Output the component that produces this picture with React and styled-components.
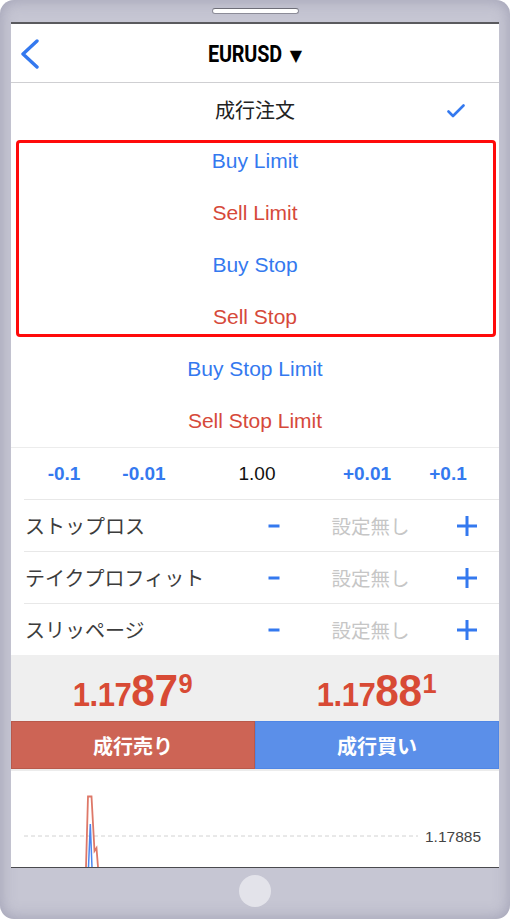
import styled, { createGlobalStyle } from "styled-components";

const BLUE = "#3479ef";
const RED = "#d6493a";

const GlobalStyle = createGlobalStyle`
  html, body {
    margin: 0;
    padding: 0;
    background: #fff;
  }
  body {
    font-family: "Liberation Sans", "Noto Sans CJK JP", sans-serif;
  }
`;

const orders = [
  { label: "Buy Limit", tone: "buy" },
  { label: "Sell Limit", tone: "sell" },
  { label: "Buy Stop", tone: "buy" },
  { label: "Sell Stop", tone: "sell" },
];

const steps = [
  { label: "-0.1", accent: true },
  { label: "-0.01", accent: true },
  { label: "1.00", accent: false },
  { label: "+0.01", accent: true },
  { label: "+0.1", accent: true },
];

const settings = ["ストップロス", "テイクプロフィット", "スリッページ"];

const Price = ({ head, big, sup }) => (
  <PriceText>
    <PriceSmall>{head}</PriceSmall>
    <PriceBig>{big}</PriceBig>
    <PriceSup>{sup}</PriceSup>
  </PriceText>
);

const App = () => {
  return (
    <>
      <GlobalStyle />
      <Device>
        <Speaker />
        <Screen>
          <Header>
            <BackButton>
              <svg width="20" height="30" viewBox="0 0 20 30">
                <polyline
                  points="17,2 3,15 17,28"
                  fill="none"
                  stroke={BLUE}
                  strokeWidth="3.4"
                  strokeLinecap="round"
                  strokeLinejoin="round"
                />
              </svg>
            </BackButton>
            <Title>
              <Symbol>EURUSD</Symbol>
              <Caret>▼</Caret>
            </Title>
          </Header>

          <OrderList>
            <OrderRow>
              成行注文
              <Check>
                <svg width="18" height="14" viewBox="0 0 18 14">
                  <polyline
                    points="1.5,7.5 6,12 16.5,1.5"
                    fill="none"
                    stroke={BLUE}
                    strokeWidth="2.6"
                    strokeLinecap="round"
                    strokeLinejoin="round"
                  />
                </svg>
              </Check>
            </OrderRow>
            <Highlight>
              {orders.map((o) => (
                <OrderRow key={o.label} $tone={o.tone}>
                  {o.label}
                </OrderRow>
              ))}
            </Highlight>
            <OrderRow $tone="buy">Buy Stop Limit</OrderRow>
            <OrderRow $tone="sell">Sell Stop Limit</OrderRow>
          </OrderList>

          <Params>
            <LotRow>
              {steps.map((s) => (
                <LotStep key={s.label} $accent={s.accent}>
                  {s.label}
                </LotStep>
              ))}
            </LotRow>
            {settings.map((name) => (
              <SettingRow key={name}>
                <SettingLabel>{name}</SettingLabel>
                <Adjust>
                  <svg width="12" height="4" viewBox="0 0 12 4">
                    <rect x="0.5" y="0.5" width="11" height="3" fill={BLUE} />
                  </svg>
                </Adjust>
                <SettingValue>設定無し</SettingValue>
                <Adjust>
                  <svg width="20" height="20" viewBox="0 0 20 20">
                    <rect x="0" y="8.5" width="20" height="3" fill={BLUE} />
                    <rect x="8.5" y="0" width="3" height="20" fill={BLUE} />
                  </svg>
                </Adjust>
              </SettingRow>
            ))}
          </Params>

          <PriceBar>
            <PriceCell>
              <Price head="1.17" big="87" sup="9" />
            </PriceCell>
            <PriceCell>
              <Price head="1.17" big="88" sup="1" />
            </PriceCell>
          </PriceBar>

          <TradeRow>
            <TradeButton $side="sell">成行売り</TradeButton>
            <TradeButton $side="buy">成行買い</TradeButton>
          </TradeRow>

          <Chart>
            <svg width="488" height="96" viewBox="0 0 488 96">
              <line
                x1="13"
                y1="65"
                x2="407"
                y2="65"
                stroke="#d2d2d2"
                strokeWidth="1"
                strokeDasharray="4 3"
              />
              <text
                x="414"
                y="71"
                fontFamily="Liberation Sans, sans-serif"
                fontSize="15.5"
                fill="#444"
              >
                1.17885
              </text>
              <path
                d="M75,96 L77,25.5 L80.5,25.5 L83.5,80 L85.5,77 L87,96"
                fill="none"
                stroke="#d8604e"
                strokeWidth="1.8"
                strokeOpacity="0.85"
              />
              <path
                d="M77.5,96 L79.3,53 L81,96"
                fill="none"
                stroke="#4c86ef"
                strokeWidth="1.5"
              />
            </svg>
          </Chart>
        </Screen>
        <BottomBezel>
          <HomeButton />
        </BottomBezel>
      </Device>
    </>
  );
};

export default App;

const Device = styled.div`
  width: 510px;
  height: 919px;
  box-sizing: border-box;
  border-radius: 14px;
  background: #c6c6d3;
  box-shadow: inset 0 0 16px rgba(110, 110, 140, 0.45);
  display: flex;
  flex-direction: column;
  overflow: hidden;
`;

const Speaker = styled.div`
  width: 87px;
  height: 6px;
  box-sizing: border-box;
  margin: 8px auto 8px;
  border: 1px solid #8c8c98;
  border-top-color: #6e6e78;
  border-radius: 4px;
  background: #fff;
`;

const Screen = styled.div`
  margin: 0 11px;
  background: #fff;
  border-top: 2px solid #5a5a5e;
  border-bottom: 1px solid #4a4a4e;
  display: flex;
  flex-direction: column;
`;

const Header = styled.div`
  height: 58px;
  border-bottom: 1px solid #cfcfd2;
  display: grid;
  grid-template-columns: 70px 1fr 70px;
  align-items: center;
`;

const BackButton = styled.div`
  padding-left: 9px;
  padding-top: 2px;
  display: flex;
  align-items: center;
`;

const Title = styled.div`
  display: flex;
  align-items: center;
  justify-content: center;
  padding-top: 2px;
  color: #000;
`;

const Symbol = styled.span`
  display: inline-block;
  font-family: Roboto, "Liberation Sans", sans-serif;
  font-weight: 700;
  font-size: 23px;
  letter-spacing: -0.2px;
  transform: scaleX(0.86);
  margin: 0 -6px;
`;

const Caret = styled.span`
  font-family: "DejaVu Sans", sans-serif;
  font-size: 16px;
  margin-left: 8px;
  padding-top: 3px;
`;

const OrderList = styled.div`
  display: flex;
  flex-direction: column;
`;

const OrderRow = styled.div`
  position: relative;
  height: 52px;
  display: flex;
  align-items: center;
  justify-content: center;
  font-size: ${(p) => (p.$tone ? "21px" : "20px")};
  color: ${(p) => (p.$tone === "buy" ? BLUE : p.$tone === "sell" ? RED : "#222")};
`;

const Check = styled.span`
  position: absolute;
  right: 34px;
  top: 21px;
  display: flex;
`;

const Highlight = styled.div`
  position: relative;

  &::after {
    content: "";
    position: absolute;
    top: 5px;
    bottom: 6px;
    left: 5px;
    right: 3px;
    border: 3px solid #ff0a0a;
    border-radius: 4px;
    pointer-events: none;
  }
`;

const Params = styled.div`
  border-top: 1px solid #ececec;
  padding-left: 13px;
`;

const LotRow = styled.div`
  height: 51px;
  border-bottom: 1px solid #e8e8e8;
  display: grid;
  grid-template-columns: 80px 80px 146px 74px 88px;
  align-items: center;
  justify-items: center;
`;

const LotStep = styled.span`
  font-size: 19px;
  font-weight: ${(p) => (p.$accent ? 700 : 400)};
  color: ${(p) => (p.$accent ? BLUE : "#111")};
`;

const SettingRow = styled.div`
  height: 52px;
  box-sizing: border-box;
  border-bottom: 1px solid #e8e8e8;
  display: grid;
  grid-template-columns: 226px 48px 145px 48px;
  align-items: center;

  &:last-child {
    border-bottom: none;
    height: 51px;
  }
`;

const SettingLabel = styled.span`
  padding-left: 1px;
  font-family: "Noto Sans CJK JP", sans-serif;
  font-size: 20px;
  color: #3c3c3c;
  white-space: nowrap;
`;

const Adjust = styled.span`
  display: flex;
  justify-content: center;
  align-items: center;
`;

const SettingValue = styled.span`
  text-align: center;
  font-family: "Noto Sans CJK JP", sans-serif;
  font-size: 19.5px;
  color: #c6c6c6;
`;

const PriceBar = styled.div`
  height: 66px;
  background: #efefef;
  display: grid;
  grid-template-columns: 1fr 1fr;
  align-items: center;
`;

const PriceCell = styled.div`
  display: flex;
  justify-content: center;
  padding-top: 4px;
`;

const PriceText = styled.div`
  display: inline-block;
  color: #d84a35;
  font-weight: 700;
  line-height: 1;
  white-space: nowrap;
  transform: scaleX(0.94);
`;

const PriceSmall = styled.span`
  font-size: 33px;
  letter-spacing: -0.5px;
`;

const PriceBig = styled.span`
  font-size: 45px;
  letter-spacing: -0.5px;
`;

const PriceSup = styled.span`
  font-size: 27px;
  vertical-align: 13px;
  margin-left: 1px;
`;

const TradeRow = styled.div`
  height: 48px;
  display: grid;
  grid-template-columns: 244px 244px;
`;

const TradeButton = styled.div`
  box-sizing: border-box;
  display: flex;
  align-items: center;
  justify-content: center;
  font-family: "Noto Sans CJK JP", sans-serif;
  font-weight: 700;
  font-size: 20px;
  color: #fff;
  background: ${(p) => (p.$side === "sell" ? "#cd6455" : "#5b8fe9")};
  border: 1px solid ${(p) => (p.$side === "sell" ? "#b9594b" : "#4f86e6")};
`;

const Chart = styled.div`
  height: 96px;
  border-top: 2px solid #ececec;
  display: flex;
`;

const BottomBezel = styled.div`
  flex: 1;
  display: flex;
  justify-content: center;
  padding-top: 7px;
`;

const HomeButton = styled.div`
  width: 32px;
  height: 32px;
  border-radius: 50%;
  background: #e3e3ea;
`;
